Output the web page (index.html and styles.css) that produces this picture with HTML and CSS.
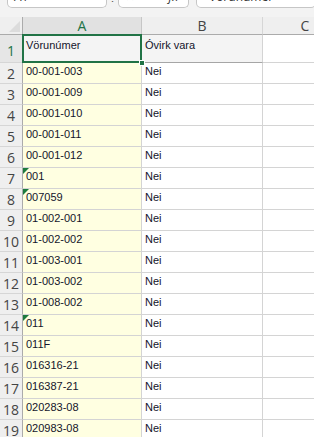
FILE: index.html
```html
<!DOCTYPE html>
<html>
<head>
<meta charset="utf-8">
<link rel="stylesheet" href="styles.css">
</head>
<body>
<div class="toolbar">
  <div class="box namebox">A1</div>
  <div class="dots">⋮</div>
  <div class="box fxbox"><span class="x">✕</span><span class="ok">✓</span><span class="fx">fx</span></div>
  <div class="box formula">Vörunúmer</div>
</div>
<div class="sheet">
  <div class="corner"></div>
  <div class="colhdr sel">A</div>
  <div class="colhdr">B</div>
  <div class="colhdr">C</div>

  <div class="rowhdr selrow">1</div>
  <div class="cell head active">Vörunúmer</div>
  <div class="cell head">Óvirk vara</div>
  <div class="cell"></div>

  <div class="rowhdr">2</div><div class="cell a">00-001-003</div><div class="cell">Nei</div><div class="cell"></div>
  <div class="rowhdr">3</div><div class="cell a">00-001-009</div><div class="cell">Nei</div><div class="cell"></div>
  <div class="rowhdr">4</div><div class="cell a">00-001-010</div><div class="cell">Nei</div><div class="cell"></div>
  <div class="rowhdr">5</div><div class="cell a">00-001-011</div><div class="cell">Nei</div><div class="cell"></div>
  <div class="rowhdr">6</div><div class="cell a">00-001-012</div><div class="cell">Nei</div><div class="cell"></div>
  <div class="rowhdr">7</div><div class="cell a warn">001</div><div class="cell">Nei</div><div class="cell"></div>
  <div class="rowhdr">8</div><div class="cell a warn">007059</div><div class="cell">Nei</div><div class="cell"></div>
  <div class="rowhdr">9</div><div class="cell a">01-002-001</div><div class="cell">Nei</div><div class="cell"></div>
  <div class="rowhdr">10</div><div class="cell a">01-002-002</div><div class="cell">Nei</div><div class="cell"></div>
  <div class="rowhdr">11</div><div class="cell a">01-003-001</div><div class="cell">Nei</div><div class="cell"></div>
  <div class="rowhdr">12</div><div class="cell a">01-003-002</div><div class="cell">Nei</div><div class="cell"></div>
  <div class="rowhdr">13</div><div class="cell a">01-008-002</div><div class="cell">Nei</div><div class="cell"></div>
  <div class="rowhdr">14</div><div class="cell a warn">011</div><div class="cell">Nei</div><div class="cell"></div>
  <div class="rowhdr">15</div><div class="cell a">011F</div><div class="cell">Nei</div><div class="cell"></div>
  <div class="rowhdr">16</div><div class="cell a">016316-21</div><div class="cell">Nei</div><div class="cell"></div>
  <div class="rowhdr">17</div><div class="cell a">016387-21</div><div class="cell">Nei</div><div class="cell"></div>
  <div class="rowhdr">18</div><div class="cell a">020283-08</div><div class="cell">Nei</div><div class="cell"></div>
  <div class="rowhdr">19</div><div class="cell a">020983-08</div><div class="cell">Nei</div><div class="cell"></div>
</div>
</body>
</html>
```

FILE: styles.css
```css
html, body {
  margin: 0;
  padding: 0;
  overflow: hidden;
  background: #ffffff;
  width: 314px;
  height: 437px;
}
.toolbar {
  height: 17px;
  background: #f3f3f3;
  display: flex;
  align-items: flex-end;
  overflow: hidden;
  font-family: "Open Sans", "Liberation Sans", sans-serif;
  font-size: 12px;
  color: #333;
}
.box {
  background: #fff;
  border: 1px solid #c6c6c6;
  border-top: none;
  border-radius: 0 0 5px 5px;
  height: 22px;
  margin-bottom: 9px;
  box-sizing: border-box;
  display: flex;
  align-items: flex-end;
  padding-bottom: 3px;
  line-height: 14px;
  flex: none;
}
.namebox {
  margin-left: 7px;
  width: 100px;
  padding-left: 6px;
}
.dots {
  width: 22px;
  text-align: center;
  margin-bottom: 13px;
  line-height: 12px;
  color: #555;
  font-size: 11px;
}
.fxbox {
  width: 71px;
  justify-content: space-between;
  padding-left: 6px;
  padding-right: 10px;
  color: #999;
}
.fxbox .fx { color: #333; font-style: italic; }
.formula {
  margin-left: 7px;
  width: 120px;
  padding-left: 12px;
}
.sheet {
  display: grid;
  grid-template-columns: 23px 119px 121px 85px;
  grid-template-rows: 18px 28px repeat(18, 21px);
  width: 348px;
}
.corner, .colhdr, .rowhdr {
  background: #efefef;
  box-sizing: border-box;
  font-family: "Open Sans", "Noto Sans", sans-serif;
  color: #444;
}
.corner {
  border-right: 1px solid #ababab;
  border-bottom: 1px solid #ababab;
  position: relative;
}
.corner::after {
  content: "";
  position: absolute;
  right: 2px;
  bottom: 2px;
  width: 0;
  height: 0;
  border-left: 11px solid transparent;
  border-bottom: 11px solid #dcdcdc;
}
.colhdr {
  border-right: 1px solid #d6d6d6;
  border-bottom: 1px solid #ababab;
  font-size: 14px;
  display: flex;
  align-items: flex-end;
  justify-content: center;
  line-height: 17px;
}
.colhdr.sel {
  background: #e1e1e1;
  color: #217346;
  border-right-color: #c6c6c6;
}
.rowhdr {
  border-right: 1px solid #ababab;
  border-bottom: 1px solid #d6d6d6;
  font-size: 14px;
  display: flex;
  align-items: flex-end;
  justify-content: center;
  line-height: 19px;
}
.rowhdr.selrow {
  background: #e6e6e6;
  color: #217346;
  line-height: 22px;
}
.cell {
  box-sizing: border-box;
  border-right: 1px solid #d4d4d4;
  border-bottom: 1px solid #d4d4d4;
  font-family: "Liberation Sans", Arial, sans-serif;
  font-size: 11px;
  color: #14142b;
  padding: 2px 0 0 3px;
  line-height: 13px;
  white-space: nowrap;
  overflow: hidden;
  position: relative;
}
.cell.a {
  background: #ffffe1;
}
.cell.head {
  background: #f4f4f4;
  border-bottom-color: #a6a6a6;
  padding-top: 4px;
}
.cell.head.active {
  overflow: visible;
  z-index: 2;
}
.cell.active::after {
  content: "";
  position: absolute;
  left: -1px;
  top: -1px;
  right: -1px;
  bottom: -1px;
  border: 2px solid #217346;
  pointer-events: none;
}
.cell.active::before {
  content: "";
  position: absolute;
  right: -4px;
  bottom: -4px;
  width: 6px;
  height: 6px;
  background: #217346;
  border: 1px solid #fff;
  box-sizing: border-box;
  z-index: 3;
}
.cell.warn::before {
  content: "";
  position: absolute;
  left: 0;
  top: 0;
  width: 0;
  height: 0;
  border-top: 6px solid #1d7a3e;
  border-right: 6px solid transparent;
}
```
